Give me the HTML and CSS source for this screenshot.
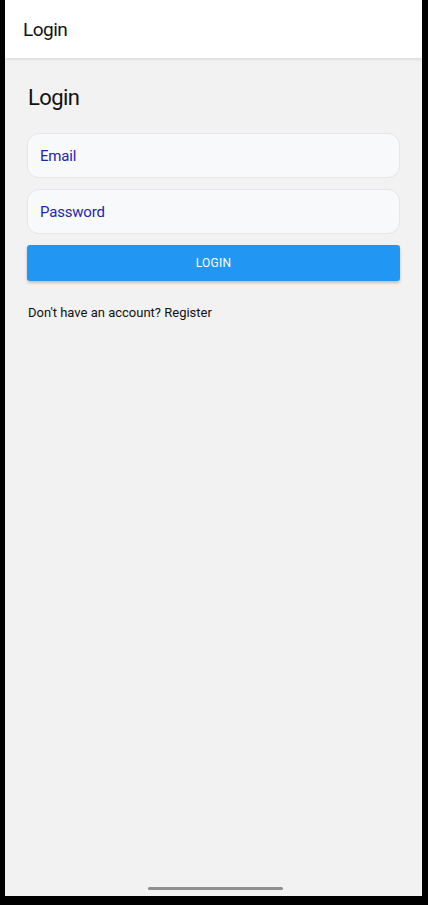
FILE: index.html
```html
<!DOCTYPE html>
<html lang="en">
<head>
<meta charset="utf-8">
<title>Login</title>
<link rel="stylesheet" href="styles.css">
</head>
<body>
<div class="screen">
  <header class="appbar">
    <span class="appbar-title">Login</span>
  </header>
  <main class="content">
    <h1 class="page-title">Login</h1>
    <form class="form">
      <div class="field"><span class="placeholder">Email</span></div>
      <div class="field"><span class="placeholder">Password</span></div>
      <button type="button" class="btn">LOGIN</button>
    </form>
    <p class="register">Don't have an account? Register</p>
  </main>
  <div class="home-bar"><span class="home-indicator"></span></div>
</div>
</body>
</html>
```
FILE: styles.css
```css
* { box-sizing: border-box; }
html, body { margin: 0; padding: 0; }
body {
  background: #000;
  width: 428px;
  height: 905px;
  overflow: hidden;
  font-family: "Roboto", "Noto Sans", sans-serif;
}
.screen {
  margin: 0 6px 0 5px;
  height: 896px;
  background: #f2f2f2;
  display: flex;
  flex-direction: column;
}
.appbar {
  height: 58px;
  background: #fff;
  display: flex;
  align-items: center;
  padding-left: 18px;
  box-shadow: 0 1px 3px rgba(0,0,0,0.12);
  position: relative;
  z-index: 1;
}
.appbar-title {
  font-size: 19px;
  color: #111;
  letter-spacing: -0.5px;
}
.content {
  flex: 1;
  padding: 26px 22px 0 22px;
}
.page-title {
  margin: 0 0 0 1px;
  font-size: 22px;
  font-weight: 400;
  color: #111;
  line-height: 28px;
  letter-spacing: -0.6px;
}
.form {
  margin-top: 21px;
  display: flex;
  flex-direction: column;
  gap: 11px;
}
.field {
  height: 45px;
  background: #f8f9fb;
  border: 1px solid #e5e6ea;
  border-radius: 12px;
  display: flex;
  align-items: center;
  padding-left: 12px;
}
.placeholder {
  color: #2424b0;
  font-size: 15px;
  letter-spacing: -0.2px;
}
.btn {
  height: 36px;
  border: none;
  border-radius: 3px;
  background: #2196f3;
  color: #fff;
  font-family: inherit;
  font-size: 12px;
  letter-spacing: 0.2px;
  box-shadow: 0 2px 3px rgba(0,0,0,0.2);
}
.register {
  margin: 24px 0 0 1px;
  font-size: 13px;
  color: #111;
  letter-spacing: 0;
}
.home-bar {
  height: 9px;
  display: flex;
  justify-content: center;
  align-items: flex-start;
}
.home-indicator {
  display: block;
  width: 135px;
  height: 3px;
  border-radius: 2px;
  background: #8f8f8f;
  margin-left: 4px;
}
```
